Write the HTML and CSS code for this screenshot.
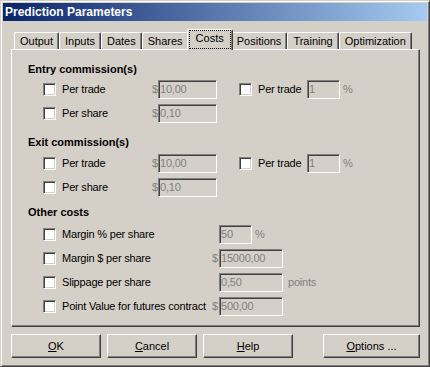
FILE: index.html
```html
<!DOCTYPE html>
<html lang="en">
<head>
    <meta charset="UTF-8">
    <title>Prediction Parameters</title>
    <link rel="stylesheet" href="styles.css">
</head>
<body>
    <div class="window">
        <div class="titlebar">Prediction Parameters</div>
        <div class="content">
            <div class="tabs">
                <div class="tab">Output</div>
                <div class="tab">Inputs</div>
                <div class="tab">Dates</div>
                <div class="tab">Shares</div>
                <div class="tab active"><span class="focus">Costs</span></div>
                <div class="tab">Positions</div>
                <div class="tab">Training</div>
                <div class="tab">Optimization</div>
            </div>
            <div class="panel">
                <div class="section entry">
                    <h4>Entry commission(s)</h4>
                    <div class="row">
                        <input type="checkbox">
                        <span class="label">Per trade</span>
                        <span class="unit">$</span>
                        <input type="text" class="field wide" value="10,00" disabled>
                        <input type="checkbox" class="second">
                        <span class="label short">Per trade</span>
                        <input type="text" class="field narrow" value="1" disabled>
                        <span class="suffix">%</span>
                    </div>
                    <div class="row">
                        <input type="checkbox">
                        <span class="label">Per share</span>
                        <span class="unit">$</span>
                        <input type="text" class="field wide" value="0,10" disabled>
                    </div>
                </div>
                <div class="section exit">
                    <h4>Exit commission(s)</h4>
                    <div class="row">
                        <input type="checkbox">
                        <span class="label">Per trade</span>
                        <span class="unit">$</span>
                        <input type="text" class="field wide" value="10,00" disabled>
                        <input type="checkbox" class="second">
                        <span class="label short">Per trade</span>
                        <input type="text" class="field narrow" value="1" disabled>
                        <span class="suffix">%</span>
                    </div>
                    <div class="row">
                        <input type="checkbox">
                        <span class="label">Per share</span>
                        <span class="unit">$</span>
                        <input type="text" class="field wide" value="0,10" disabled>
                    </div>
                </div>
                <div class="section other">
                    <h4>Other costs</h4>
                    <div class="row">
                        <input type="checkbox">
                        <span class="label long">Margin % per share</span>
                        <span class="unit"></span>
                        <input type="text" class="field narrow" value="50" disabled>
                        <span class="suffix">%</span>
                    </div>
                    <div class="row">
                        <input type="checkbox">
                        <span class="label long">Margin $ per share</span>
                        <span class="unit">$</span>
                        <input type="text" class="field big" value="15000,00" disabled>
                    </div>
                    <div class="row">
                        <input type="checkbox">
                        <span class="label long">Slippage per share</span>
                        <span class="unit"></span>
                        <input type="text" class="field big" value="0,50" disabled>
                        <span class="suffix points">points</span>
                    </div>
                    <div class="row">
                        <input type="checkbox">
                        <span class="label long">Point Value for futures contract</span>
                        <span class="unit">$</span>
                        <input type="text" class="field big" value="500,00" disabled>
                    </div>
                </div>
            </div>
            <div class="buttons">
                <button><u>O</u>K</button>
                <button><u>C</u>ancel</button>
                <button><u>H</u>elp</button>
                <button class="options"><u>O</u>ptions ...</button>
            </div>
        </div>
    </div>
</body>
</html>
```

FILE: styles.css
```css
body {
    margin: 0;
    font-family: "Liberation Sans", Arial, sans-serif;
    font-size: 11px;
    color: #000;
}
.window {
    width: 430px;
    height: 367px;
    box-sizing: border-box;
    background-color: #d4d0c8;
    border: 1px solid;
    border-color: #d4d0c8 #404040 #404040 #d4d0c8;
    box-shadow: inset 1px 1px #fff, inset -1px -1px #808080;
    padding: 2px;
}
.titlebar {
    height: 18px;
    padding-left: 2px;
    display: flex;
    align-items: center;
    background: linear-gradient(to right, #0a246a, #a6caf0);
    color: #fff;
    font-weight: bold;
    font-size: 12px;
}
.content {
    padding: 9px 7px 0 8px;
}
.tabs {
    display: flex;
    align-items: flex-end;
    height: 19px;
    padding-left: 3px;
    position: relative;
    z-index: 1;
}
.tab {
    line-height: 15px;
    padding: 1px 5px 0;
    border: 1px solid;
    border-bottom: none;
    border-color: #fff #404040 #404040 #fff;
    border-radius: 2px 2px 0 0;
    box-shadow: inset -1px 0 #808080;
    background-color: #d4d0c8;
}
.tab.active {
    position: relative;
    margin: 0 -2px -1px;
    padding: 0 1px 1px;
}
.focus {
    display: block;
    padding: 0 6px 2px;
    border: 1px dotted #000;
}
.panel {
    border: 1px solid;
    border-color: #fff #404040 #404040 #fff;
    box-shadow: inset -1px -1px #808080;
    padding: 12px 16px 8px;
}
h4 {
    margin: 0;
    font-size: 11px;
    line-height: 14px;
    font-weight: bold;
}
.entry h4 {
    margin-bottom: 1px;
}
.exit {
    margin-top: 10px;
}
.exit h4 {
    margin-bottom: 2px;
}
.other {
    margin-top: 6px;
}
.other h4 {
    margin-bottom: 3px;
}
.row {
    display: flex;
    align-items: center;
    height: 24px;
    padding-left: 15px;
    letter-spacing: -0.2px;
}
input[type="checkbox"] {
    appearance: none;
    width: 13px;
    height: 13px;
    margin: 0 6px 0 0;
    box-sizing: border-box;
    background-color: #fff;
    border: 1px solid;
    border-color: #808080 #fff #fff #808080;
    box-shadow: inset 1px 1px #404040, inset -1px -1px #d4d0c8;
}
input.second {
    margin-left: 22px;
}
.label {
    width: 90px;
    white-space: nowrap;
}
.label.short {
    width: 49px;
}
.label.long {
    width: 150px;
}
.unit {
    width: 6px;
    color: #808080;
}
.other .unit {
    width: 7px;
}
.field {
    appearance: none;
    height: 19px;
    margin: 0;
    box-sizing: border-box;
    padding: 0 1px;
    border: 1px solid;
    border-color: #808080 #fff #fff #808080;
    box-shadow: inset 1px 1px #404040, inset -1px -1px #d4d0c8;
    background-color: #d4d0c8;
    color: #808080;
    font: inherit;
    letter-spacing: inherit;
    outline: none;
}
.field.wide {
    width: 59px;
}
.field.narrow {
    width: 33px;
}
.field.big {
    width: 64px;
}
.suffix {
    margin-left: 3px;
    color: #808080;
}
.suffix.points {
    margin-left: 5px;
}
.buttons {
    display: flex;
    gap: 6px;
    margin-top: 7px;
}
button {
    width: 90px;
    height: 24px;
    padding: 0;
    border: 1px solid;
    border-color: #fff #404040 #404040 #fff;
    box-shadow: inset -1px -1px #808080;
    background-color: #d4d0c8;
    font-family: inherit;
    font-size: 11px;
    color: #000;
}
button.options {
    width: 97px;
    margin-left: auto;
}
```
